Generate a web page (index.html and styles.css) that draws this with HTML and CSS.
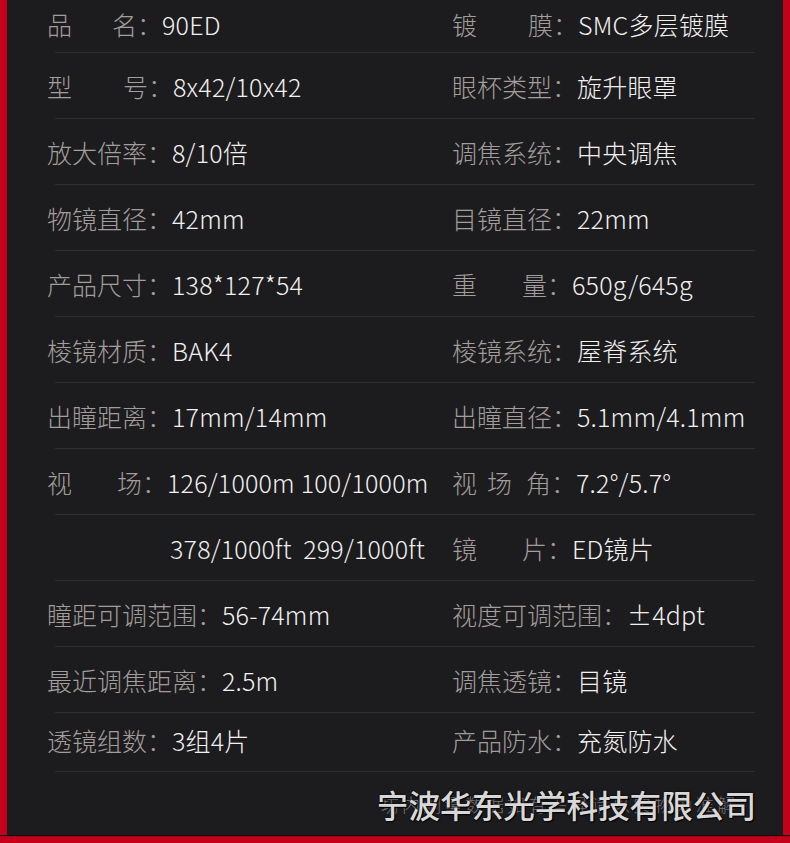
FILE: index.html
```html
<!DOCTYPE html>
<html lang="zh-CN">
<head>
    <meta charset="UTF-8">
    <meta name="viewport" content="width=device-width, initial-scale=1.0">
    <title>产品参数</title>
    <link rel="stylesheet" href="styles.css">
</head>
<body>
    <div class="sheet">
        <div class="specs">
            <div class="row first">
                <div class="cell"><span class="label">品<i class="sp40"></i>名：</span><span class="value">90ED</span></div>
                <div class="cell"><span class="label">镀<i class="sp50"></i>膜：</span><span class="value">SMC多层镀膜</span></div>
            </div>
            <div class="row">
                <div class="cell"><span class="label">型<i class="sp50"></i>号：</span><span class="value">8x42/10x42</span></div>
                <div class="cell"><span class="label">眼杯类型：</span><span class="value">旋升眼罩</span></div>
            </div>
            <div class="row">
                <div class="cell"><span class="label">放大倍率：</span><span class="value">8/10倍</span></div>
                <div class="cell"><span class="label">调焦系统：</span><span class="value">中央调焦</span></div>
            </div>
            <div class="row">
                <div class="cell"><span class="label">物镜直径：</span><span class="value">42mm</span></div>
                <div class="cell"><span class="label">目镜直径：</span><span class="value">22mm</span></div>
            </div>
            <div class="row">
                <div class="cell"><span class="label">产品尺寸：</span><span class="value">138*127*54</span></div>
                <div class="cell"><span class="label">重<i class="sp45"></i>量：</span><span class="value">650g/645g</span></div>
            </div>
            <div class="row">
                <div class="cell"><span class="label">棱镜材质：</span><span class="value">BAK4</span></div>
                <div class="cell"><span class="label">棱镜系统：</span><span class="value">屋脊系统</span></div>
            </div>
            <div class="row">
                <div class="cell"><span class="label">出瞳距离：</span><span class="value">17mm/14mm</span></div>
                <div class="cell"><span class="label">出瞳直径：</span><span class="value">5.1mm/4.1mm</span></div>
            </div>
            <div class="row">
                <div class="cell"><span class="label">视<i class="sp45"></i>场：</span><span class="value">126/1000m 100/1000m</span></div>
                <div class="cell"><span class="label">视<i class="sp10"></i>场<i class="sp14"></i>角：</span><span class="value">7.2°/5.7°</span></div>
            </div>
            <div class="row">
                <div class="cell indent"><span class="value">378/1000ft  299/1000ft</span></div>
                <div class="cell"><span class="label">镜<i class="sp45"></i>片：</span><span class="value">ED镜片</span></div>
            </div>
            <div class="row">
                <div class="cell"><span class="label">瞳距可调范围：</span><span class="value">56-74mm</span></div>
                <div class="cell"><span class="label">视度可调范围：</span><span class="value">±4dpt</span></div>
            </div>
            <div class="row">
                <div class="cell"><span class="label">最近调焦距离：</span><span class="value">2.5m</span></div>
                <div class="cell"><span class="label">调焦透镜：</span><span class="value">目镜</span></div>
            </div>
            <div class="row last">
                <div class="cell"><span class="label">透镜组数：</span><span class="value">3组4片</span></div>
                <div class="cell"><span class="label">产品防水：</span><span class="value">充氮防水</span></div>
            </div>
        </div>

        <div class="footer">
            <div class="note">坊内测量数据如有差异请以实物为准解</div>
            <div class="company">宁波华东光学科技有限公司</div>
        </div>
    </div>
</body>
</html>
```

FILE: styles.css
```css
* {
    margin: 0;
    padding: 0;
    box-sizing: border-box;
}
body {
    background: #c5001a;
    font-family: "Noto Sans CJK SC", "Noto Sans", sans-serif;
    font-weight: 300;
    width: 790px;
    height: 843px;
    overflow: hidden;
}
.sheet {
    background: #1c1b1e;
    border-left: 7px solid #c5001a;
    border-right: 7px solid #c5001a;
    height: 835px;
    overflow: hidden;
    box-shadow: 0 1px 1px #120a0c;
}
.specs {
    margin-top: -13px;
}
.row {
    display: grid;
    grid-template-columns: 405px 1fr;
    height: 66px;
    line-height: 66px;
    padding-left: 40px;
    font-size: 25px;
    white-space: pre;
    background-image: linear-gradient(#2e2d31, #2e2d31);
    background-repeat: no-repeat;
    background-size: 700px 1px;
    background-position: 48px 100%;
}
.row.first {
    line-height: 74px;
}
.row.last {
    height: 59px;
    line-height: 54px;
}
.cell {
    display: flex;
}
.cell.indent {
    padding-left: 123px;
}
.label {
    color: #a29e9b;
    display: flex;
}
.value {
    color: #f2f1f0;
    letter-spacing: 0.2px;
}
.label i {
    display: inline-block;
}
.sp10 { width: 10px; }
.sp14 { width: 14px; }
.sp40 { width: 40px; }
.sp45 { width: 45px; }
.sp50 { width: 51px; }
.footer {
    display: grid;
    justify-items: end;
    align-items: center;
    height: 63px;
    padding-right: 27px;
}
.note,
.company {
    grid-area: 1 / 1;
}
.note {
    font-size: 18px;
    color: #77757a;
    letter-spacing: 3px;
    margin-right: 18px;
}
.company {
    font-size: 31.6px;
    font-weight: 500;
    color: #d9d8d8;
    text-shadow: 0 0 2px #000, 1px 1px 1px #000;
}
```
